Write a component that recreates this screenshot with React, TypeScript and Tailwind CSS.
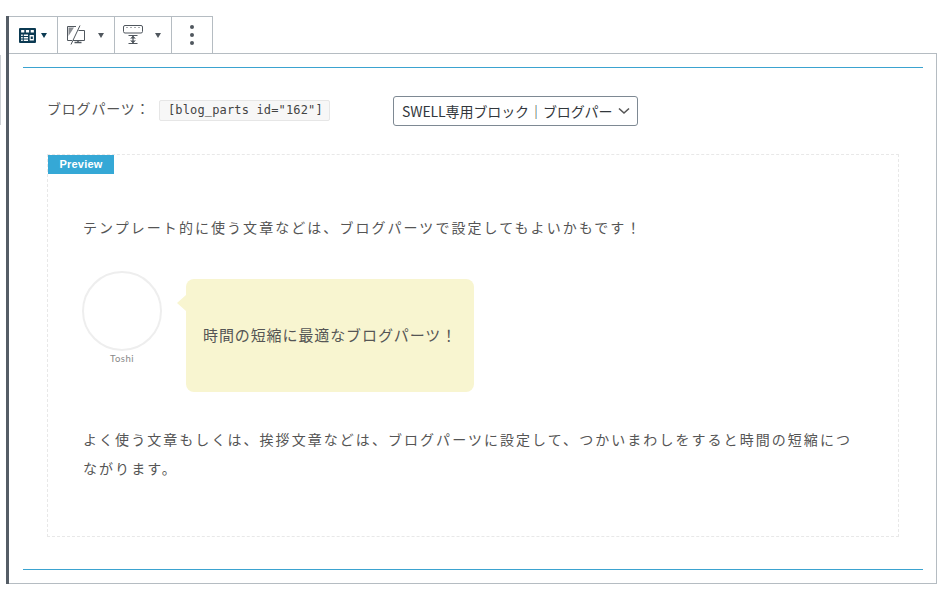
const jp = { fontFamily: '"Noto Sans CJK JP", "Noto Sans", sans-serif' }

function BlockIcon() {
  return (
    <svg width="17" height="15" viewBox="0 0 16 15" preserveAspectRatio="none">
      <rect x="0" y="0" width="16" height="15" rx="1" fill="#0b3a52" />
      <rect x="2" y="2" width="3" height="2.5" fill="#fff" />
      <rect x="6.5" y="2" width="3" height="2.5" fill="#fff" />
      <rect x="11" y="2" width="3" height="2.5" fill="#fff" />
      <rect x="2" y="6.5" width="1.5" height="1.5" fill="#fff" />
      <rect x="4.5" y="6.5" width="4" height="1.5" fill="#fff" />
      <rect x="2" y="9" width="1.5" height="1.5" fill="#fff" />
      <rect x="4.5" y="9" width="4" height="1.5" fill="#fff" />
      <rect x="2" y="11.5" width="1.5" height="1.5" fill="#fff" />
      <rect x="4.5" y="11.5" width="4" height="1.5" fill="#fff" />
      <rect x="10" y="7" width="4" height="5.5" fill="#fff" />
      <rect x="11" y="8.5" width="2" height="2.5" fill="#0b3a52" />
    </svg>
  )
}

function DeviceIcon() {
  return (
    <svg width="20" height="20" viewBox="0 0 20 20" fill="none" stroke="#50575e" strokeWidth="1">
      <path d="M10 1.5H1.5V15.5H6" />
      <path d="M2.5 2.5H8L2.5 11Z" fill="#8c8f94" stroke="none" />
      <path d="M12.5 5.5H18.5V15.5H7" />
      <path d="M14 0.5L5 19.5" />
      <path d="M12 15.5V17.5M8.5 17.5H15.5" strokeWidth="1.5" />
    </svg>
  )
}

function MarginIcon() {
  return (
    <svg width="20" height="20" viewBox="0 0 20 20" fill="none" stroke="#50575e">
      <rect x="0.5" y="0.5" width="19" height="7.5" rx="1.5" strokeWidth="1" />
      <path d="M3 2.5H5M7 2.5H9M11 2.5H13M15 2.5H17" stroke="#a7aaad" />
      <path d="M5.5 10.5H14.5M5.5 18.5H14.5" strokeWidth="1.2" />
      <path d="M10 10.5V18.5" strokeWidth="1.2" />
      <path d="M7.5 13.5L10 11L12.5 13.5M7.5 15.5L10 18L12.5 15.5" fill="#50575e" strokeWidth="0.6" />
    </svg>
  )
}

function Caret({ color = "#50575e" }: { color?: string }) {
  return (
    <svg width="6" height="5" viewBox="0 0 6 5">
      <path d="M0 0H6L3 5Z" fill={color} />
    </svg>
  )
}

export default function App() {
  return (
    <div className="w-[950px] h-[591px] bg-white overflow-hidden relative">
      <div className="absolute left-0 top-[55px] h-[70px] w-px bg-[#ccd0d4]" />
      <div className="pt-[16px] pl-[6px] w-[937px]">
        <div className="border-l-[3px] border-[#555d66]">
          {/* toolbar */}
          <div className="flex h-[38px] w-[204px] border-t border-r border-b border-[#b5bcc2] -mb-px relative bg-white">
            <div className="w-[49px] flex items-center pl-[10px] gap-[5px] border-r border-[#b5bcc2]">
              <BlockIcon />
              <Caret color="#0b3a52" />
            </div>
            <div className="w-[57px] flex items-center pl-[8px] gap-[12px] border-r border-[#b5bcc2]">
              <DeviceIcon />
              <Caret />
            </div>
            <div className="w-[57px] flex items-center pl-[8px] gap-[12px] border-r border-[#b5bcc2]">
              <MarginIcon />
              <Caret />
            </div>
            <div className="flex-1 flex flex-col items-center justify-center gap-[4px]">
              <span className="w-[4px] h-[4px] rounded-full bg-[#50575e]" />
              <span className="w-[4px] h-[4px] rounded-full bg-[#50575e]" />
              <span className="w-[4px] h-[4px] rounded-full bg-[#50575e]" />
            </div>
          </div>

          {/* block body */}
          <div className="h-[531px] border-t border-r border-b border-[#b5bcc2] pt-[13px] px-[14px]">
            <div className="h-px bg-[#3ba3d0] -mr-px" />
            <div className="flex items-center h-[60px] mt-[12px] pl-[24px]" style={jp}>
              <span className="w-[112px] shrink-0 text-[14px] tracking-[0.8px] text-[#555] mb-[4px] whitespace-nowrap">ブログパーツ：</span>
              <code className="h-[21px] w-[171px] shrink-0 px-[8px] flex items-center text-[12px] text-[#444] bg-[#f7f7f7] border border-[#e6e6e6] rounded-[2px] font-['DejaVu_Sans_Mono',monospace] tracking-[0.15px] whitespace-nowrap">
                [blog_parts id="162"]
              </code>
              <div className="ml-[63px] mt-[2px] w-[245px] h-[30px] shrink-0 flex items-center pl-[8px] pr-[7px] border border-[#7e8993] rounded-[3px] text-[14px] text-[#32373c]">
                <span className="whitespace-nowrap flex-1 tracking-[-0.1px]">SWELL専用ブロック｜ブログパー</span>
                <svg className="shrink-0 ml-[6px]" width="12" height="8" viewBox="0 0 12 8" fill="none" stroke="#555" strokeWidth="1.6">
                  <path d="M1 1.5L6 6L11 1.5" />
                </svg>
              </div>
            </div>

            {/* preview */}
            <div className="mt-[14px] ml-[24px] w-[852px] h-[383px] border border-dashed border-[#e8e8e8] relative pl-[35px] pt-[60px]" style={jp}>
              <div className="absolute left-0 top-0 w-[66px] h-[19px] bg-[#35a8d6] flex items-center justify-center text-white text-[11px] font-bold tracking-[0.2px] font-['Liberation_Sans',sans-serif]">
                Preview
              </div>
              <p className="text-[14px] tracking-[2.05px] text-[#555] leading-[24px] whitespace-nowrap">
                テンプレート的に使う文章などは、ブログパーツで設定してもよいかもです！
              </p>
              <div className="flex mt-[32px] -ml-px">
                <div className="w-[80px] flex flex-col items-center">
                  <div className="w-[80px] h-[80px] rounded-full border-2 border-[#eeeeee]" />
                  <div className="mt-[1px] text-[9.5px] text-[#888] tracking-[0.5px] leading-[14px] font-['Lato',sans-serif]">Toshi</div>
                </div>
                <div className="relative ml-[24px] mt-[8px] w-[288px] h-[113px] bg-[#f8f5d0] rounded-[8px] flex items-center pl-[17px] text-[15px] tracking-[0.9px] text-[#555]">
                  <span className="absolute left-[-9px] top-[16px] w-0 h-0 border-y-[8px] border-y-transparent border-r-[9px] border-r-[#f8f5d0]" />
                  時間の短縮に最適なブログパーツ！
                </div>
              </div>
              <p className="mt-[33px] w-[775px] text-[14px] tracking-[2.05px] text-[#555] leading-[29px]">
                よく使う文章もしくは、挨拶文章などは、ブログパーツに設定して、つかいまわしをすると時間の短縮につながります。
              </p>
            </div>

            <div className="h-px bg-[#3ba3d0] mt-[32px] -mr-px" />
          </div>
        </div>
      </div>
    </div>
  )
}
